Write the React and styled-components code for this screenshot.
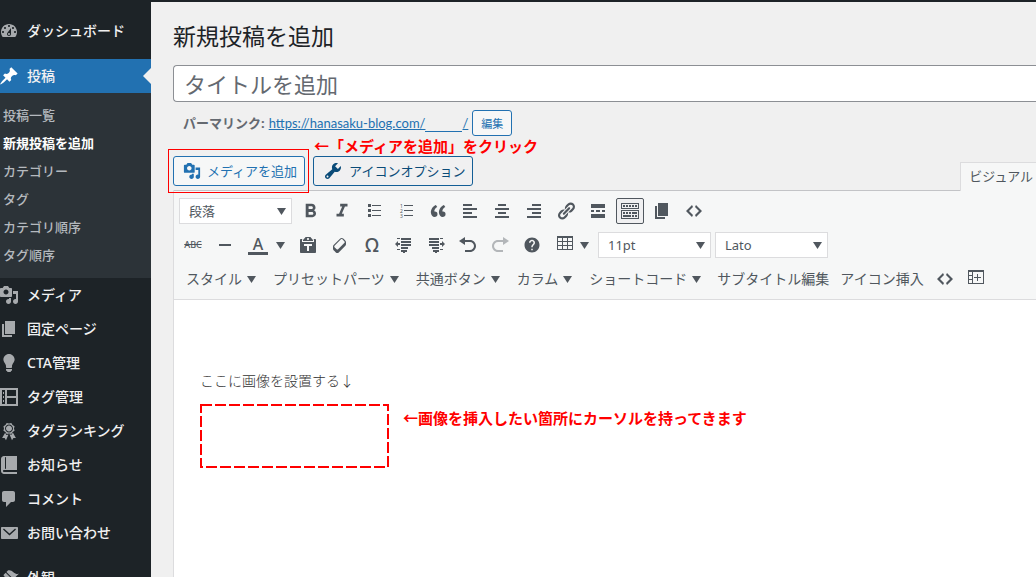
import React, { useState } from 'react'
import styled, { createGlobalStyle } from 'styled-components'
import { MdFormatBold, MdFormatItalic, MdHelp } from 'react-icons/md'

const paths = {
    dashboard: "M3.76 16h12.48c1.1-1.37 1.76-3.11 1.76-5 0-4.42-3.58-8-8-8s-8 3.58-8 8c0 1.89.66 3.63 1.76 5zM10 4c.55 0 1 .45 1 1s-.45 1-1 1-1-.45-1-1 .45-1 1-1zM6 6c.55 0 1 .45 1 1s-.45 1-1 1-1-.45-1-1 .45-1 1-1zm8 0c.55 0 1 .45 1 1s-.45 1-1 1-1-.45-1-1 .45-1 1-1zm-5.37 5.55L12 7v6c0 1.1-.9 2-2 2s-2-.9-2-2c0-.57.24-1.08.63-1.45zM4 10c.55 0 1 .45 1 1s-.45 1-1 1-1-.45-1-1 .45-1 1-1zm12 0c.55 0 1 .45 1 1s-.45 1-1 1-1-.45-1-1 .45-1 1-1zm-5 3c0-.55-.45-1-1-1s-1 .45-1 1 .45 1 1 1 1-.45 1-1z",
    pin: "M10.44 3.02l1.82-1.82 6.36 6.35-1.83 1.82c-1.05-.68-2.48-.57-3.41.36l-.75.75c-.92.93-1.04 2.35-.35 3.41l-1.83 1.82-2.41-2.41-2.8 2.79c-.42.42-3.38 2.71-3.8 2.29s1.86-3.39 2.28-3.81l2.79-2.79L4.1 9.36l1.83-1.82c1.05.69 2.48.57 3.4-.36l.75-.75c.93-.92 1.05-2.35.36-3.41z",
    media: "M13 11V4c0-.55-.45-1-1-1h-1.67L9 1H5L3.67 3H2c-.55 0-1 .45-1 1v7c0 .55.45 1 1 1h10c.55 0 1-.45 1-1zM7 4.5c1.38 0 2.5 1.12 2.5 2.5S8.38 9.5 7 9.5 4.5 8.38 4.5 7 5.62 4.5 7 4.5zM14 6h5v10.5c0 1.38-1.12 2.5-2.5 2.5S14 17.88 14 16.5s1.12-2.5 2.5-2.5c.17 0 .34.02.5.05V9h-3V6zm-4 8.05V13h2v3.5c0 1.38-1.12 2.5-2.5 2.5S7 17.88 7 16.5 8.12 14 9.5 14c.17 0 .34.02.5.05z",
    page: "M6 15V2h10v13H6zm-1 1h8v2H3V5h2v11z",
    bulb: "M10 1c3.11 0 5.63 2.52 5.63 5.62 0 1.84-2.03 4.58-2.03 4.58-.33.44-.6 1.25-.6 1.8v1c0 .55-.45 1-1 1H8c-.55 0-1-.45-1-1v-1c0-.55-.27-1.36-.6-1.8 0 0-2.02-2.74-2.02-4.58C4.38 3.52 6.89 1 10 1zM7 16.87V16h6v.87c0 .62-.13 1.13-.75 1.13H12c0 .62-.4 1-1.02 1h-2c-.61 0-.98-.38-.98-1h-.25c-.62 0-.75-.51-.75-1.13z",
    index: "M1 1h18v18H1zM3 3v14h3V3zM8 3v6h9V3zM8 11v6h9v-6zM4 5h1v2H4zM4 9h1v2H4zM4 13h1v2H4z",
    award: "M4.46 5.16L5 7.46l-.54 2.29 2.01 1.24L7.7 13l2.3-.54 2.3.54 1.23-2.01 2.01-1.24L15 7.46l.54-2.3-2-1.24-1.24-2.01-2.3.55-2.29-.54-1.25 2zm5.55 6.34c-2.21 0-4-1.79-4-4 0-2.2 1.79-4 4-4s4 1.8 4 4c0 2.21-1.79 4-4 4zm-.02-1C8.33 10.5 7 9.16 7 7.5c0-1.65 1.33-3 2.99-3S13 5.85 13 7.5c0 1.66-1.35 3-3.01 3zm3.84 1.1l-1.28 2.24-2.08-.47L13 19.2l1.4-2.2h2.5zm-7.7.07l1.25 2.25 2.13-.51L7 19.2 5.6 17H3.1z",
    book: "M5 17h13v2H5c-1.66 0-3-1.34-3-3V4c0-1.66 1.34-3 3-3h13v14H5c-.55 0-1 .45-1 1s.45 1 1 1zm2-3.5v-11c0-.28-.22-.5-.5-.5s-.5.22-.5.5v11c0 .28.22.5.5.5s.5-.22.5-.5z",
    comment: "M5 2h9c1.1 0 2 .9 2 2v7c0 1.1-.9 2-2 2h-2l-5 5v-5H5c-1.1 0-2-.9-2-2V4c0-1.1.9-2 2-2z",
    mail: "M3 4h15c.55 0 1 .45 1 1v10c0 .55-.45 1-1 1H3c-.55 0-1-.45-1-1V5c0-.55.45-1 1-1zm7.500 8.500l6.500-6-.9-1-5.600 5-5.600-5-.9 1z",
    brush: "M14.48 11.06L7.41 3.99l1.5-1.5c.5-.56 2.3-.47 3.51.32 1.21.8 1.43 1.28 2.91 2.1 1.18.64 2.45 1.26 4.45.85zm-.71.71L6.7 4.7 4.93 6.47c-.39.39-.39 1.02 0 1.41l1.06 1.06c.39.39.39 1.03 0 1.42-.6.6-1.43 1.11-2.21 1.69-.35.26-.7.53-1.01.84C1.43 14.23.4 16.08 1.4 17.07c.99 1 2.84-.03 4.18-1.36.31-.31.58-.66.85-1.02.57-.78 1.08-1.61 1.69-2.21.39-.39 1.02-.39 1.41 0l1.06 1.06c.39.39 1.02.39 1.41 0z",
    wrench: "M16.68 9.77c-1.34 1.34-3.3 1.67-4.95.99l-5.41 6.52c-.99.99-2.59.99-3.58 0s-.99-2.59 0-3.57l6.52-5.42c-.68-1.65-.35-3.61.99-4.95 1.28-1.28 3.12-1.62 4.72-1.06l-2.89 2.89 2.82 2.82 2.86-2.87c.53 1.58.18 3.39-1.08 4.65zM3.81 16.21c.4.39 1.04.39 1.43 0 .4-.4.4-1.04 0-1.43-.39-.4-1.03-.4-1.43 0-.39.39-.39 1.03 0 1.43z",
    bullets: "M4 3h3v3H4zM4 8h3v3H4zM4 13h3v3H4zM8 4h9v1H8zM8 9h9v1H8zM8 14h9v1H8z",
    quote: "M9.49 13.22c0-.74-.2-1.38-.61-1.9-.62-.78-1.83-.88-2.53-.72-.29-1.65 1.11-3.75 2.92-4.65L7.88 4c-2.73 1.3-5.42 4.28-4.96 8.05C3.21 14.43 4.59 16 6.54 16c.85 0 1.56-.25 2.12-.75s.83-1.18.83-2.03zm8.05 0c0-.74-.2-1.38-.61-1.9-.63-.78-1.83-.88-2.53-.72-.29-1.65 1.11-3.75 2.92-4.65L15.93 4c-2.73 1.3-5.41 4.28-4.95 8.05.29 2.38 1.66 3.95 3.61 3.95.85 0 1.56-.25 2.12-.75s.83-1.18.83-2.03z",
    left: "M12 5V3H3v2h9zm5 4V7H3v2h14zm-5 4v-2H3v2h9zm5 4v-2H3v2h14z",
    center: "M14 5V3H6v2h8zm3 4V7H3v2h14zm-3 4v-2H6v2h8zm3 4v-2H3v2h14z",
    right: "M17 5V3H8v2h9zm0 4V7H3v2h14zm0 4v-2H8v2h9zm0 4v-2H3v2h14z",
    link: "M17.74 2.76c1.68 1.69 1.68 4.41 0 6.1l-1.53 1.52c-1.12 1.12-2.7 1.47-4.14 1.09l2.62-2.61.76-.77.76-.76c.84-.84.84-2.2 0-3.04-.84-.85-2.2-.85-3.04 0l-.77.76-3.38 3.38c-.37-1.44-.02-3.02 1.1-4.14l1.52-1.53c1.69-1.68 4.42-1.68 6.1 0zM8.59 13.43l5.34-5.34c.42-.42.42-1.1 0-1.52-.44-.43-1.13-.39-1.53 0l-5.33 5.34c-.42.42-.42 1.1 0 1.52.44.43 1.13.39 1.52 0zm-.76 2.29l4.14-4.15c.38 1.44.03 3.02-1.09 4.14l-1.52 1.53c-1.69 1.68-4.41 1.68-6.1 0-1.68-1.68-1.68-4.42 0-6.1l1.53-1.52c1.12-1.12 2.7-1.47 4.14-1.1l-4.14 4.15c-.85.84-.85 2.2 0 3.05.84.84 2.2.84 3.04 0z",
    more: "M17 7V3H3v4h14zM6 11V9H3v2h3zm6 0V9H8v2h4zm5 0V9h-3v2h3zm0 6v-4H3v4h14z",
    keyboard: "M19 2v6H1V2h18zm-1 5V3H2v4h16zM5 4v2H3V4h2zm3 0v2H6V4h2zm3 0v2H9V4h2zm3 0v2h-2V4h2zm3 0v2h-2V4h2zm2 5v9H1V9h18zm-1 8v-7H2v7h16zM5 11v2H3v-2h2zm3 0v2H6v-2h2zm3 0v2H9v-2h2zm6 0v2h-5v-2h5zm-6 3v2H3v-2h8zm3 0v2h-2v-2h2zm3 0v2h-2v-2h2z",
    code: "M9 6l-4 4 4 4-1 2-6-6 6-6zm2 8l4-4-4-4 1-2 6 6-6 6z",
    rule: "M4 9h12v2H4z",
    paste: "M12.38 2L15 5v1H5V5l2.64-3h4.74zM10 5c.55 0 1-.44 1-1 0-.55-.45-1-1-1s-1 .45-1 1c0 .56.45 1 1 1zm5.45-1H17c.55 0 1 .45 1 1v12c0 .56-.45 1-1 1H3c-.55 0-1-.44-1-1V5c0-.55.45-1 1-1h1.55L4 4.63V7h12V4.63zM14 11V9H6v2h3v5h2v-5h3z",
    eraser: "M14.29 4.59l1.1 1.11c.41.4.61.94.61 1.47v2.12c0 .53-.2 1.07-.61 1.47l-6.63 6.63c-.4.41-.94.61-1.47.61s-1.07-.2-1.47-.61l-1.11-1.1-1.1-1.11c-.41-.4-.61-.94-.61-1.47v-2.12c0-.54.2-1.07.61-1.48l6.63-6.62c.4-.41.94-.61 1.47-.61s1.06.2 1.47.61zm-6.21 9.7l6.42-6.42c.39-.39.39-1.03 0-1.43L12.36 4.3c-.19-.19-.45-.29-.72-.29s-.52.1-.71.29l-6.42 6.42c-.39.4-.39 1.04 0 1.43l2.14 2.14c.38.38 1.04.38 1.43 0z",
    outdent: "M3 3h3v1H3zM7 3h10v2H7zM7 6h10v2H7zM7 9h10v2H7zM7 12h7v2H7zM3 14h3v1H3zM7 15h6v2H7zM9 17h2v1H9zM1 9l3-3v2h2v2H4v2z",
    indent: "M3 3h10v2H3zM14 3h3v1h-3zM3 6h10v2H3zM3 9h10v2H3zM6 12h7v2H6zM14 14h3v1h-3zM7 15h6v2H7zM9 17h2v1H9zM19 9l-3-3v2h-2v2h2v2z",
    undo: "M12 5H7V2L1 6l6 4V7h5c2.2 0 4 1.8 4 4s-1.8 4-4 4H7v2h5c3.3 0 6-2.7 6-6s-2.7-6-6-6z",
    redo: "M8 5h5V2l6 4-6 4V7H8c-2.2 0-4 1.8-4 4s1.8 4 4 4h5v2H8c-3.300 0-6-2.700-6-6s2.700-6 6-6z",
    table: "M2 1h16v14H2zM3 3v3h4V3zM8 3v3h4V3zM13 3v3h4V3zM3 7v3h4V7zM8 7v3h4V7zM13 7v3h4V7zM3 11v3h4v-3zM8 11v3h4v-3zM13 11v3h4v-3z",
    tablePlus: "M2 1h16v14H2zM3 3v3h3V3zM3 7v3h3V7zM3 11v3h3v-3zM7 3v11h10V3zM11 5h1v3h3v1h-3v3h-1v-3H8V8h3z",
}

function Icon({ name, size = 20 }) {
    return (
        <svg width={size} height={size} viewBox="0 0 20 20" fill="currentColor" fillRule="evenodd" aria-hidden="true">
            <path d={paths[name]} />
        </svg>
    )
}

function NumberedIcon() {
    return (
        <svg width="20" height="20" viewBox="0 0 20 20" fill="currentColor" aria-hidden="true">
            <path d="M8 4h9v1H8zM8 9h9v1H8zM8 14h9v1H8z" />
            <text x="4" y="7" fontSize="5">1</text>
            <text x="4" y="12" fontSize="5">2</text>
            <text x="4" y="17" fontSize="5">3</text>
        </svg>
    )
}

function Caret() {
    return (
        <svg width="9" height="8" viewBox="0 0 9 8" fill="currentColor" aria-hidden="true">
            <path d="M0 1h9L4.500 8z" />
        </svg>
    )
}

function Dropdown({ label, options }) {
    return (
        <SelectBox>
            <select aria-label={label}>
                {options.map((option) => <option key={option}>{option}</option>)}
            </select>
            <Caret />
        </SelectBox>
    )
}

const submenu = ["投稿一覧", "新規投稿を追加", "カテゴリー", "タグ", "カテゴリ順序", "タグ順序"]

const menu = [
    { icon: "media", label: "メディア" },
    { icon: "page", label: "固定ページ" },
    { icon: "bulb", label: "CTA管理" },
    { icon: "index", label: "タグ管理" },
    { icon: "award", label: "タグランキング" },
    { icon: "book", label: "お知らせ" },
    { icon: "comment", label: "コメント" },
    { icon: "mail", label: "お問い合わせ" },
]

const pluginMenus = ["スタイル", "プリセットパーツ", "共通ボタン", "カラム", "ショートコード"]

function App() {
    const [title, setTitle] = useState("")
    const [expanded, setExpanded] = useState(true)

    return (
        <Page>
            <GlobalStyle />
            <Sidebar>
                <MenuLink href="#dashboard"><Icon name="dashboard" />ダッシュボード</MenuLink>
                <Separator />
                <MenuLink href="#posts" $current><Icon name="pin" />投稿</MenuLink>
                <Submenu>
                    {submenu.map((label, i) => (
                        <SubLink key={label} href="#posts" $current={i === 1}>{label}</SubLink>
                    ))}
                </Submenu>
                {menu.map(({ icon, label }) => (
                    <MenuLink key={label} href="#menu"><Icon name={icon} />{label}</MenuLink>
                ))}
                <Separator />
                <MenuLink href="#themes"><Icon name="brush" />外観</MenuLink>
            </Sidebar>
            <Main>
                <h1>新規投稿を追加</h1>
                <TitleInput
                    aria-label="タイトルを追加"
                    placeholder="タイトルを追加"
                    value={title}
                    onChange={(e) => setTitle(e.target.value)}
                />
                <Permalink>
                    <strong>パーマリンク:</strong>
                    <a href="#permalink">https://hanasaku-blog.com/<Slug />/</a>
                    <SmallButton type="button">編集</SmallButton>
                </Permalink>
                <EditorTop>
                    <Highlight>
                        <MediaButton type="button"><Icon name="media" size={18} />メディアを追加</MediaButton>
                    </Highlight>
                    <Annotated>
                        <MediaButton type="button" $dark><Icon name="wrench" />アイコンオプション</MediaButton>
                        <TopNote>←「メディアを追加」をクリック</TopNote>
                    </Annotated>
                    <Tab type="button">ビジュアル</Tab>
                </EditorTop>
                <Editor>
                    <Toolbar>
                        <Row>
                            <Dropdown label="段落" options={["段落", "見出し 2", "見出し 3"]} />
                            <Tool aria-label="太字"><MdFormatBold size={23} /></Tool>
                            <Tool aria-label="イタリック"><MdFormatItalic size={22} /></Tool>
                            <Tool aria-label="番号なしリスト"><Icon name="bullets" /></Tool>
                            <Tool aria-label="番号付きリスト"><NumberedIcon /></Tool>
                            <Tool aria-label="引用"><Icon name="quote" /></Tool>
                            <Tool aria-label="左寄せ"><Icon name="left" /></Tool>
                            <Tool aria-label="中央揃え"><Icon name="center" /></Tool>
                            <Tool aria-label="右寄せ"><Icon name="right" /></Tool>
                            <Tool aria-label="リンク"><Icon name="link" /></Tool>
                            <Tool aria-label="続きを読む"><Icon name="more" /></Tool>
                            <Tool aria-label="ツールバー切り替え" $active={expanded} onClick={() => setExpanded(!expanded)}>
                                <Icon name="keyboard" />
                            </Tool>
                            <Tool aria-label="ページ区切り"><Icon name="page" /></Tool>
                            <Tool aria-label="コード"><Icon name="code" /></Tool>
                        </Row>
                        {expanded && <>
                            <Row>
                                <Tool aria-label="打ち消し"><Strike>ABC</Strike></Tool>
                                <Tool aria-label="横ライン"><Icon name="rule" /></Tool>
                                <SplitTool aria-label="テキスト色" $gap="8px"><ColorLetter>A</ColorLetter><Caret /></SplitTool>
                                <Tool aria-label="テキストとしてペースト"><Icon name="paste" /></Tool>
                                <Tool aria-label="書式設定をクリア"><Icon name="eraser" /></Tool>
                                <Tool aria-label="特殊文字"><Omega>Ω</Omega></Tool>
                                <Tool aria-label="インデントを減らす"><Icon name="outdent" /></Tool>
                                <Tool aria-label="インデントを増やす"><Icon name="indent" /></Tool>
                                <Tool aria-label="取り消し"><Icon name="undo" /></Tool>
                                <Tool aria-label="やり直し" disabled><Icon name="redo" /></Tool>
                                <Tool aria-label="ヘルプ"><MdHelp size={18} /></Tool>
                                <SplitTool aria-label="テーブル" $gap="5px"><Icon name="table" /><Caret /></SplitTool>
                                <Dropdown label="フォントサイズ" options={["11pt", "12pt", "14pt"]} />
                                <Dropdown label="フォント" options={["Lato", "Arial", "Georgia"]} />
                            </Row>
                            <MenuRow>
                                {pluginMenus.map((label) => (
                                    <TextTool key={label} $menu>{label}<Caret /></TextTool>
                                ))}
                                <TextTool>サブタイトル編集</TextTool>
                                <TextTool>アイコン挿入</TextTool>
                                <Tool aria-label="ソースコード"><Icon name="code" /></Tool>
                                <Tool aria-label="表を挿入"><Icon name="tablePlus" /></Tool>
                            </MenuRow>
                        </>}
                    </Toolbar>
                    <Document>
                        <p>ここに画像を設置する↓</p>
                        <DropArea>
                            <svg width="190" height="65" aria-hidden="true">
                                <rect x="1" y="1" width="187" height="62" fill="none" stroke="#f00" strokeWidth="2" strokeDasharray="11 3" />
                            </svg>
                            <Note>←画像を挿入したい箇所にカーソルを持ってきます</Note>
                        </DropArea>
                    </Document>
                </Editor>
            </Main>
        </Page>
    )
}

const GlobalStyle = createGlobalStyle`
    *{
        box-sizing:border-box;
    }
    body{
        margin:0;
        background:#f0f0f0;
        color:#3c434a;
        font-family:"Noto Sans","Noto Sans CJK JP",sans-serif;
        font-size:13px;
    }
    button,input,select{
        font-family:inherit;
        font-size:inherit;
    }
    svg{
        flex-shrink:0;
    }
`

const Page = styled.div`
    display:flex;
    height:100vh;
    overflow:hidden;
`

const Sidebar = styled.nav`
    flex:0 0 151px;
    background:#1d2327;
    padding-top:14px;
`

const Separator = styled.div`
    height:11px;
`

const MenuLink = styled.a`
    display:flex;
    align-items:center;
    gap:8px;
    height:34px;
    margin-left:-1px;
    position:relative;
    color:#f0f0f1;
    font-size:14px;
    font-weight:500;
    line-height:20px;
    text-decoration:none;
    background:${({ $current }) => $current ? "#2271b1" : "transparent"};
    svg{
        color:${({ $current }) => $current ? "#fff" : "#a7aaad"};
    }
    &::after{
        content:"";
        display:${({ $current }) => $current ? "block" : "none"};
        position:absolute;
        right:0;
        top:9px;
        border:8px solid transparent;
        border-right-color:#f0f0f0;
        border-left:0;
    }
`

const Submenu = styled.div`
    display:flex;
    flex-direction:column;
    padding:8px 3px 9px;
    background:#2c3338;
`

const SubLink = styled.a`
    line-height:28px;
    text-decoration:none;
    color:${({ $current }) => $current ? "#fff" : "#b4b9be"};
    font-weight:${({ $current }) => $current ? 700 : 500};
`

const Main = styled.main`
    flex:1;
    min-width:0;
    display:flex;
    flex-direction:column;
    padding-left:22px;
    border-top:2px solid #1d2327;
    h1{
        margin:18px 0 12px;
        font-size:23px;
        font-weight:400;
        line-height:33px;
        color:#1d2327;
    }
`

const TitleInput = styled.input`
    height:37px;
    flex-shrink:0;
    padding:0 10px;
    border:1px solid #8c8f94;
    border-right:0;
    border-radius:4px 0 0 4px;
    background:#fff;
    font-size:22px;
    outline:none;
    &::placeholder{
        color:#646970;
        opacity:1;
    }
`

const Permalink = styled.div`
    display:flex;
    align-items:center;
    gap:4px;
    padding:8px 10px 0;
    color:#646970;
    line-height:18px;
    a{
        color:#2271b1;
        font-family:Lato,"Noto Sans",sans-serif;
    }
`

const Slug = styled.span`
    display:inline-block;
    width:37px;
    height:15px;
    vertical-align:bottom;
    border-bottom:1px solid #2271b1;
`

const SmallButton = styled.button`
    height:26px;
    padding:0 8px;
    border:1px solid #2271b1;
    border-radius:3px;
    background:#f6f7f7;
    color:#2271b1;
    font-size:11px;
`

const EditorTop = styled.div`
    display:flex;
    align-items:flex-start;
    gap:8px;
    padding-top:20px;
`

const Highlight = styled.div`
    position:relative;
    z-index:1;
    &::after{
        content:"";
        position:absolute;
        inset:-7px -4px -7px -5px;
        border:1px solid #f00;
        pointer-events:none;
    }
`

const Annotated = styled.div`
    position:relative;
`

const MediaButton = styled.button`
    display:flex;
    align-items:center;
    gap:6px;
    height:30px;
    padding:0 7px 0 9px;
    border:1px solid ${({ $dark }) => $dark ? "#135e96" : "#2271b1"};
    border-radius:3px;
    background:${({ $dark }) => $dark ? "#f0f0f1" : "#f6f7f7"};
    color:${({ $dark }) => $dark ? "#0a4b78" : "#2271b1"};
    line-height:20px;
    white-space:nowrap;
`

const Note = styled.span`
    color:#f00;
    font-size:15px;
    font-weight:700;
    line-height:20px;
    white-space:nowrap;
`

const TopNote = styled(Note)`
    position:absolute;
    left:1px;
    bottom:30px;
`

const Tab = styled.button`
    height:29px;
    margin:6px 0 -1px auto;
    padding:0 3px 2px 8px;
    border:1px solid #dcdcde;
    border-width:1px 0 0 1px;
    background:#f6f7f7;
    color:#50575e;
    line-height:20px;
    white-space:nowrap;
    position:relative;
`

const Editor = styled.section`
    flex:1;
    display:flex;
    flex-direction:column;
    border-left:1px solid #dcdcde;
    background:#fff;
`

const Toolbar = styled.div`
    display:flex;
    flex-direction:column;
    gap:4px;
    padding:5px;
    border-top:1px solid #c3c4c7;
    border-bottom:1px solid #dcdcde;
    background:#f6f7f7;
`

const Row = styled.div`
    display:flex;
    align-items:center;
    gap:4px;
    height:30px;
`

const MenuRow = styled(Row)`
    gap:3px;
    padding-left:2px;
`

const Tool = styled.button.attrs({ type: "button" })`
    display:flex;
    align-items:center;
    justify-content:center;
    flex:0 0 28px;
    height:26px;
    padding:0;
    border:1px solid ${({ $active }) => $active ? "#50575e" : "transparent"};
    border-radius:2px;
    background:${({ $active }) => $active ? "#f0f0f1" : "none"};
    color:#50575e;
    &:disabled{
        opacity:0.4;
    }
`

const SplitTool = styled(Tool)`
    flex:0 0 auto;
    gap:${({ $gap }) => $gap};
    padding:0 4px;
`

const Strike = styled.span`
    font-size:9px;
    font-weight:500;
    line-height:12px;
    text-decoration:line-through;
`

const ColorLetter = styled.span`
    width:20px;
    border-bottom:3px solid #50575e;
    font-size:16px;
    font-weight:500;
    line-height:16px;
    text-align:center;
`

const Omega = styled.span`
    font-size:19px;
    font-weight:500;
    line-height:20px;
`

const TextTool = styled.button.attrs({ type: "button" })`
    display:flex;
    align-items:center;
    gap:5px;
    height:26px;
    padding:0 ${({ $menu }) => $menu ? "9px 0 5px" : "4px"};
    border:0;
    background:none;
    color:#50575e;
    font-size:14px;
    line-height:20px;
    white-space:nowrap;
`

const SelectBox = styled.div`
    position:relative;
    flex:0 0 113px;
    color:#50575e;
    select{
        appearance:none;
        display:block;
        width:100%;
        height:26px;
        padding:0 20px 1px 9px;
        border:1px solid #dcdcde;
        border-radius:0;
        background:#fff;
        color:inherit;
    }
    svg{
        position:absolute;
        right:6px;
        top:9px;
        pointer-events:none;
    }
`

const Document = styled.div`
    padding:71px 26px;
    p{
        margin:0 0 13px;
        color:#333;
        font-size:14px;
        font-weight:300;
        line-height:20px;
    }
`

const DropArea = styled.div`
    display:flex;
    gap:13px;
    ${Note}{
        margin-top:4px;
    }
`

export default App
